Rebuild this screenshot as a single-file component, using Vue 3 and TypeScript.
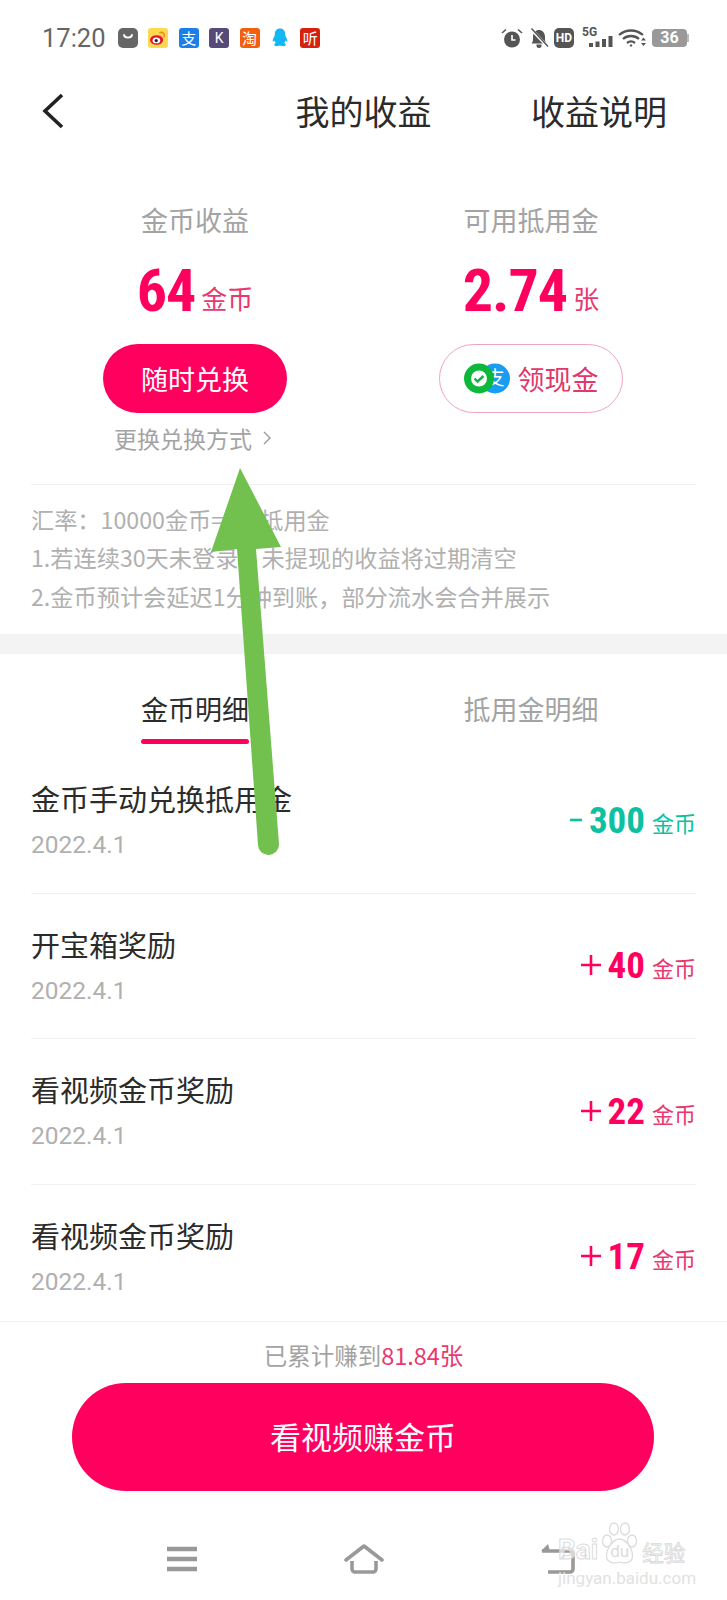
<template>
  <div class="phone">
    <!-- status bar -->
    <div class="status">
      <span class="time">17:20</span>
      <div class="apps">
        <span class="app app-mall"><svg viewBox="0 0 20 20" width="20" height="20"><path d="M6 7c.6 3.4 7.4 3.4 8 0" fill="none" stroke="#fff" stroke-width="1.8" stroke-linecap="round" /></svg></span>
        <span class="app app-weibo">
          <svg viewBox="0 0 20 20" width="20" height="20">
            <ellipse cx="8.6" cy="12" rx="6.6" ry="4.8" fill="#e6162d" />
            <ellipse cx="8.4" cy="12.4" rx="3.8" ry="2.9" fill="#fff" />
            <circle cx="8.2" cy="12.6" r="1.6" fill="#222" />
            <path d="M12 4.6c3-.8 5 1.4 4.2 4.2" fill="none" stroke="#f08c1e" stroke-width="1.6" stroke-linecap="round" />
          </svg>
        </span>
        <span class="app app-ali">支</span>
        <span class="app app-keep">K</span>
        <span class="app app-taobao">淘</span>
        <span class="app app-qq">
          <svg viewBox="0 0 20 20" width="20" height="20">
            <path d="M10 .5c-3.4 0-5.2 2.6-5.2 5.6 0 1.200-.2 2-1 3.400-1 1.800-1.400 3.600-.8 4 .4.200 1-.4 1.400-1 .3 1 .8 1.900 1.500 2.600-1 .4-1.700 1-1.700 1.700 0 1 1.800 1.700 3.600 1.200.8-.2 1.400-.4 2.200-.4s1.400.2 2.200.4c1.800.5 3.600-.2 3.600-1.200 0-.7-.7-1.300-1.700-1.700.7-.7 1.200-1.600 1.500-2.600.4.600 1 1.200 1.400 1 .6-.4.2-2.200-.8-4-.8-1.400-1-2.200-1-3.400C15.200 3.100 13.400.5 10 .5z" fill="#12b7f5" />
          </svg>
        </span>
        <span class="app app-ting">听</span>
      </div>
      <div class="sys">
        <svg class="sys-alarm" viewBox="0 0 22 20" width="22" height="20">
          <circle cx="11" cy="11.500" r="8" fill="#555" />
          <path d="M11 7v5h3.500" fill="none" stroke="#fff" stroke-width="1.600" />
          <path d="M1 5l4-3.500M21 5l-4-3.500" stroke="#555" stroke-width="1.600" />
        </svg>
        <svg class="sys-bell" viewBox="0 0 20 20" width="20" height="20">
          <path d="M2.500 15.500c1.500-1.500 1.500-3 1.500-6.500C4 4.500 7 2 10 2s6 2.500 6 7c0 3.500 0 5 1.500 6.500z" fill="#555" />
          <path d="M7.500 16.500h5v1a2.500 2.500 0 0 1-5 0z" fill="#555" />
          <path d="M2 1l16 17" stroke="#fff" stroke-width="3" />
          <path d="M2.500 .5l16.500 18" stroke="#555" stroke-width="1.400" />
        </svg>
        <span class="hd">HD</span>
        <div class="signal">
          <span class="five">5G</span>
          <svg viewBox="0 0 24 12" width="24" height="12">
            <rect x="0" y="7" width="4" height="4" fill="#555" />
            <rect x="6.500" y="5.500" width="4" height="5.500" fill="#555" />
            <rect x="13" y="3" width="4" height="8" fill="#555" />
            <rect x="19.500" y="0" width="4" height="11" fill="#555" />
          </svg>
        </div>
        <svg class="sys-wifi" viewBox="0 0 28 20" width="28" height="20">
          <path d="M1 7c7-6 17-6 24 0M5 11c4.500-4 11.500-4 16 0M9 15c2.500-2 5.500-2 8 0" fill="none" stroke="#555" stroke-width="2.300" />
          <path d="M11.500 17.500l1.500-1.500 1.500 1.500-1.500 1.500z" fill="#555" />
          <path d="M23 12.500l2.500-3 2.500 3zM23 15l2.500 3 2.500-3z" fill="#555" />
        </svg>
        <div class="battery"><span>36</span></div>
      </div>
    </div>

    <!-- header -->
    <div class="nav">
      <svg class="back" viewBox="0 0 22 36" width="22" height="36">
        <path d="M20 2L3 18l17 16" fill="none" stroke="#222" stroke-width="3.600" />
      </svg>
      <div class="nav-title">我的收益</div>
      <div class="nav-action">收益说明</div>
    </div>

    <!-- balances -->
    <div class="summary">
      <div class="col">
        <div class="label">金币收益</div>
        <div class="value"><b class="num">64</b><span>金币</span></div>
        <div class="pill pill-solid">随时兑换</div>
        <div class="change">更换兑换方式<svg viewBox="0 0 8 14" width="8" height="14"><path d="M1 1l6 6-6 6" fill="none" stroke="#999" stroke-width="1.400" /></svg></div>
      </div>
      <div class="col">
        <div class="label">可用抵用金</div>
        <div class="value"><b class="num">2.74</b><span>张</span></div>
        <div class="pill pill-line">
          <svg viewBox="0 0 46 31" width="46" height="31">
            <circle cx="31" cy="15.500" r="15" fill="#1a9df0" />
            <text x="31" y="22" font-size="19" fill="#fff" text-anchor="middle" font-family="'Noto Sans CJK SC', sans-serif">支</text>
            <circle cx="15" cy="15.500" r="15" fill="#0cb83a" />
            <circle cx="15" cy="15.500" r="8" fill="#fff" />
            <path d="M10.500 15.500l3 3 6-5.500" fill="none" stroke="#0cb83a" stroke-width="2.400" />
          </svg>
          领现金
        </div>
      </div>
    </div>

    <div class="rules">
      <p v-for="line in rules" :key="line">{{ line }}</p>
    </div>

    <div class="band"></div>

    <!-- tabs -->
    <div class="tabs">
      <div class="tab tab-active">金币明细</div>
      <div class="tab">抵用金明细</div>
    </div>

    <div class="list">
      <div v-for="(row, i) in rows" :key="i" class="row">
        <div>
          <div class="row-title">{{ row.title }}</div>
          <div class="row-date">2022.4.1</div>
        </div>
        <div class="amount" :class="{ minus: row.sign === '-' }">
          <svg class="sign" :viewBox="row.sign === '-' ? '0 0 12 20' : '0 0 20 20'" :width="row.sign === '-' ? 12 : 20" height="20">
            <path :d="row.sign === '-' ? 'M0 10h12' : 'M0 10h20M10 0v20'" fill="none" stroke="currentColor" stroke-width="2.600" />
          </svg>
          <b class="num">{{ row.value }}</b><span>金币</span>
        </div>
      </div>
    </div>

    <!-- bottom -->
    <div class="footer">
      <div class="earned">已累计赚到<em>81.84张</em></div>
      <div class="cta">看视频赚金币</div>
    </div>

    <div class="softkeys">
      <svg viewBox="0 0 32 26" width="32" height="26">
        <path d="M1 3h30M1 13h30M1 23h30" stroke="#999" stroke-width="4.400" />
      </svg>
      <svg class="key-home" viewBox="0 0 40 30" width="40" height="30">
        <path d="M2 16L20 2l18 14" fill="none" stroke="#999" stroke-width="3.600" stroke-linecap="round" stroke-linejoin="round" />
        <path d="M8 17v8a3 3 0 0 0 3 3h18a3 3 0 0 0 3-3v-8" fill="none" stroke="#999" stroke-width="3.600" />
      </svg>
      <svg class="key-back" viewBox="0 0 34 30" width="34" height="30">
        <path d="M1 7h28a3 3 0 0 1 3 3v15a3 3 0 0 1-3 3H7" fill="none" stroke="#999" stroke-width="3.600" />
        <path d="M7 0L0 7h9z" fill="#999" />
      </svg>
    </div>

    <!-- drawn on top of the screenshot -->
    <svg class="arrow" viewBox="0 0 72 388" width="72" height="388">
      <path d="M30 0L1 84l26-3 21 296a10.500 10.500 0 0 0 21-1L46 81l25-2z" fill="#72c14f" />
    </svg>

    <div class="watermark">
      <div class="wm-top">
        <span class="wm-bai">Bai</span>
        <span class="wm-paw">
          <svg viewBox="0 0 37 43" width="37" height="43">
            <g fill="rgba(255,255,255,.55)" stroke="#dcdcdc" stroke-width="1.300">
              <ellipse cx="6" cy="19" rx="4.500" ry="6" />
              <ellipse cx="13" cy="7" rx="4.500" ry="6" />
              <ellipse cx="24" cy="7" rx="4.500" ry="6" />
              <ellipse cx="31" cy="19" rx="4.500" ry="6" />
              <path d="M18.500 17c-7 0-13 10-13 17 0 7 8 8 13 6 5 2 13 1 13-6 0-7-6-17-13-17z" />
            </g>
          </svg>
          <span class="wm-du">du</span>
        </span>
        <span class="wm-cn">经验</span>
      </div>
      <div class="wm-url">jingyan.baidu.com</div>
    </div>
  </div>
</template>

<script setup lang="ts">
interface Row {
  title: string
  sign: '+' | '-'
  value: number
}

const rules: string[] = [
  '汇率：10000金币=1张抵用金',
  '1.若连续30天未登录，未提现的收益将过期清空',
  '2.金币预计会延迟1分钟到账，部分流水会合并展示',
]

const rows: Row[] = [
  { title: '金币手动兑换抵用金', sign: '-', value: 300 },
  { title: '开宝箱奖励', sign: '+', value: 40 },
  { title: '看视频金币奖励', sign: '+', value: 22 },
  { title: '看视频金币奖励', sign: '+', value: 17 },
]
</script>

<style>
html,
body {
  margin: 0;
  background: #fff;
}
</style>

<style scoped>
.phone {
  position: relative;
  display: flex;
  flex-direction: column;
  width: 727px;
  height: 1600px;
  overflow: hidden;
  background: #fff;
  color: #2b2b2b;
  font-family: "Noto Sans CJK SC", "Noto Sans", sans-serif;
}

.num {
  font-family: "Liberation Sans Narrow", "Roboto Condensed", Roboto, sans-serif;
  font-weight: 700;
}

.status {
  display: flex;
  align-items: center;
  height: 76px;
  padding-left: 42px;
  flex: none;
}
.time {
  width: 76px;
  font-family: Roboto, sans-serif;
  font-size: 25.500px;
  color: #666;
}
.apps {
  display: flex;
  gap: 10.400px;
}
.app {
  display: flex;
  align-items: center;
  justify-content: center;
  width: 20px;
  height: 20px;
  border-radius: 3px;
  font-size: 15px;
  line-height: 20px;
  color: #fff;
}
.app-mall { background: #666; border-radius: 5px; }
.app-weibo { background: #ffd94f; }
.app-ali { background: #1a7fe8; }
.app-keep { background: #584a78; font-family: Roboto, sans-serif; font-size: 14px; }
.app-taobao { background: #f2600f; }
.app-ting { background: #d8200f; }
.sys {
  display: flex;
  align-items: center;
  margin-left: auto;
  padding-right: 40px;
}
.sys-bell { margin-left: 6px; }
.hd {
  width: 20px;
  height: 20px;
  margin-left: 5px;
  border-radius: 5px;
  background: #555;
  color: #fff;
  font-family: Roboto, sans-serif;
  font-size: 12px;
  font-weight: 700;
  line-height: 20px;
  text-align: center;
}
.signal {
  position: relative;
  width: 31px;
  height: 20px;
  margin-left: 8px;
}
.signal svg {
  position: absolute;
  right: 0;
  bottom: 0;
}
.five {
  position: absolute;
  top: -3px;
  left: 0;
  color: #555;
  font-family: Roboto, sans-serif;
  font-size: 12px;
  font-weight: 700;
}
.sys-wifi { margin-left: 5px; }
.battery {
  position: relative;
  width: 35px;
  height: 18px;
  margin-left: 6px;
  border-radius: 4px;
  background: #999;
  color: #fff;
  font-family: Roboto, sans-serif;
  font-size: 16px;
  font-weight: 700;
  line-height: 18px;
  text-align: center;
}
.battery::after {
  content: "";
  position: absolute;
  top: 5px;
  right: -2px;
  width: 2px;
  height: 8px;
  background: #bbb;
}

.nav {
  display: grid;
  grid-template-columns: 1fr auto 1fr;
  align-items: center;
  height: 70px;
  padding: 0 60px 0 42px;
  flex: none;
}
.nav-title,
.nav-action {
  font-size: 34px;
  line-height: 50px;
}
.nav-title { transform: translateX(9px); }
.nav-action { justify-self: end; }

.summary {
  display: grid;
  grid-template-columns: 336px 336px;
  height: 338px;
  padding-left: 27px;
  flex: none;
}
.col {
  display: flex;
  flex-direction: column;
  align-items: center;
  padding-top: 56px;
}
.label {
  font-size: 27px;
  line-height: 36px;
  color: #a3a3a3;
}
.value {
  display: flex;
  align-items: baseline;
  gap: 6px;
  height: 70px;
  margin-top: 18px;
  color: #ff005f;
  font-size: 26px;
  line-height: 70px;
}
.value .num {
  font-size: 60px;
  letter-spacing: -1px;
}
.value span {
  color: #e8386f;
  transform: translateY(-2px);
}
.pill {
  display: flex;
  align-items: center;
  justify-content: center;
  gap: 8px;
  box-sizing: border-box;
  width: 184px;
  height: 69px;
  margin-top: 17.500px;
  border-radius: 35px;
  font-size: 27px;
}
.pill-solid {
  background: #ff005f;
  color: #fff;
}
.pill-line {
  border: 1.500px solid #f2a4b8;
  color: #e0386c;
}
.change {
  display: flex;
  align-items: center;
  gap: 11px;
  height: 32px;
  margin-top: 9.500px;
  margin-right: 5px;
  font-size: 23px;
  color: #a3a3a3;
}

.rules {
  height: 150px;
  margin: 0 31px;
  padding-top: 14.500px;
  border-top: 1px solid #f0f0f0;
  box-sizing: border-box;
  flex: none;
}
.rules p {
  margin: 0;
  font-size: 23.200px;
  line-height: 38.500px;
  color: #b0b0b0;
}

.band {
  height: 20px;
  background: #f3f3f3;
  flex: none;
}

.tabs {
  display: grid;
  grid-template-columns: 336px 336px;
  height: 94px;
  margin-left: 27px;
  flex: none;
}
.tab {
  position: relative;
  justify-self: center;
  height: 90px;
  box-sizing: border-box;
  padding-top: 37px;
  font-size: 27px;
  line-height: 36px;
  color: #a3a3a3;
}
.tab-active {
  color: #2b2b2b;
}
.tab-active::after {
  content: "";
  position: absolute;
  right: 0;
  bottom: 0;
  left: 0;
  height: 5px;
  border-radius: 3px;
  background: #ff005f;
}

.list {
  height: 573px;
  overflow: hidden;
  flex: none;
}
.row {
  display: flex;
  align-items: center;
  justify-content: space-between;
  height: 145.500px;
  margin: 0 31px;
  box-sizing: border-box;
  border-bottom: 1px solid #f2f2f2;
}
.row-title {
  font-size: 29px;
  line-height: 40px;
}
.row-date {
  margin-top: 10px;
  font-family: Roboto, sans-serif;
  font-size: 24.500px;
  line-height: 34px;
  color: #b0b0b0;
}
.amount {
  display: flex;
  align-items: baseline;
  color: #ff005f;
  font-size: 22px;
}
.amount.minus {
  color: #0dc1a0;
}
.sign {
  transform: translateY(-3px);
}
.amount .num {
  font-size: 37px;
  margin: 0 7px 0 7px;
}
.amount span {
  color: #e8386f;
  transform: translateY(-1px);
}
.amount.minus span {
  color: #0dc1a0;
}

.footer {
  display: flex;
  flex-direction: column;
  align-items: center;
  height: 170px;
  border-top: 1px solid #efefef;
  box-sizing: border-box;
  flex: none;
}
.earned {
  height: 61px;
  font-size: 23.500px;
  line-height: 66px;
  color: #a3a3a3;
}
.earned em {
  color: #e8386f;
  font-style: normal;
}
.cta {
  width: 582px;
  height: 108px;
  margin-right: 1px;
  border-radius: 54px;
  background: #ff005f;
  color: #fff;
  font-size: 31px;
  line-height: 106px;
  text-align: center;
}

.softkeys {
  display: flex;
  align-items: center;
  height: 50px;
  margin-top: 43px;
  padding-left: 166px;
}
.key-home { margin-left: 146px; }
.key-back { margin-left: 157px; }

.arrow {
  position: absolute;
  top: 468px;
  left: 210px;
}

.watermark {
  position: absolute;
  top: 1522px;
  left: 558px;
  width: 134px;
  color: #fff;
  font-family: Roboto, sans-serif;
}
.wm-top {
  display: flex;
  align-items: flex-end;
  height: 43px;
}
.wm-bai {
  color: rgba(255, 255, 255, 0.6);
  -webkit-text-stroke: 1px #dcdcdc;
  font-size: 28px;
  font-weight: 700;
  line-height: 30px;
}
.wm-paw {
  position: relative;
  display: block;
  width: 37px;
  height: 43px;
  margin-left: 3px;
}
.wm-du {
  position: absolute;
  bottom: 4px;
  left: 0;
  width: 37px;
  color: #dcdcdc;
  font-size: 17px;
  line-height: 20px;
  text-align: center;
}
.wm-cn {
  margin-left: 4px;
  color: #fff;
  -webkit-text-stroke: 0.800px #d8d8d8;
  font-family: "Noto Sans CJK SC", sans-serif;
  font-size: 21.500px;
  line-height: 26px;
}
.wm-url {
  margin-top: 4px;
  color: #e2e2e2;
  font-size: 17px;
  line-height: 18px;
}
</style>
